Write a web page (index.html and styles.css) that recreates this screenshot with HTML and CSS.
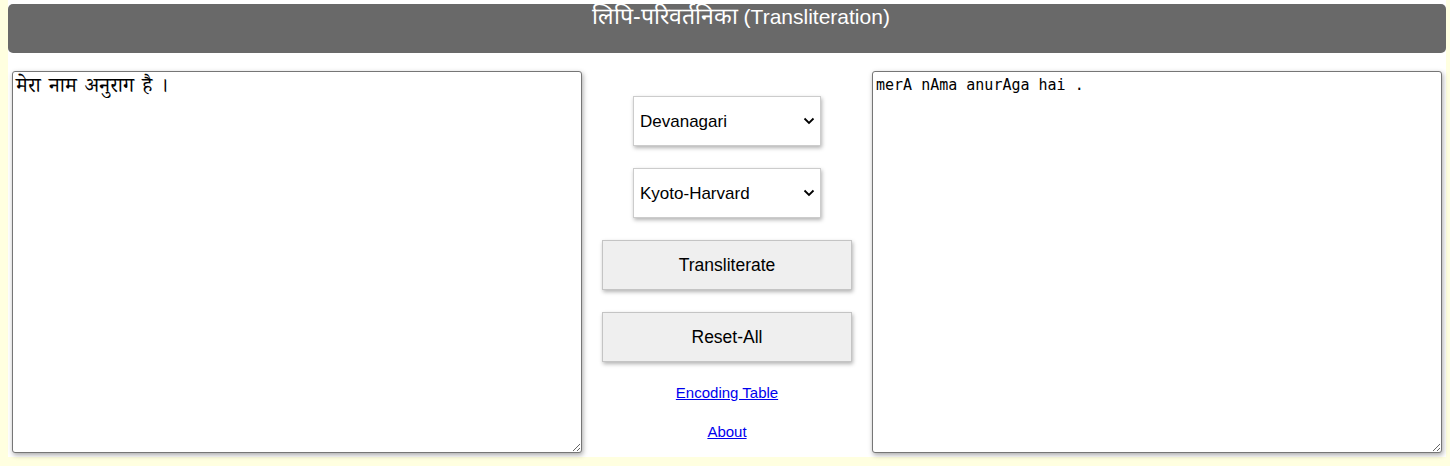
FILE: index.html
```html
<!DOCTYPE html>
<html lang="hi">
<head>
<meta charset="utf-8">
<title>लिपि-परिवर्तनिका</title>
<link rel="stylesheet" href="styles.css">
</head>
<body>
<div class="page">
  <header class="banner">
    <h1 class="title"><span class="title-hi">लिपि-परिवर्तनिका</span> (Transliteration)</h1>
  </header>
  <main class="workspace">
    <textarea class="pane pane-source">मेरा नाम अनुराग है ।</textarea>
    <div class="controls">
      <span class="picker-wrap">
        <select class="picker">
          <option>Devanagari</option>
          <option>Kyoto-Harvard</option>
          <option>IAST</option>
        </select>
        <svg class="chevron" width="12" height="8" viewBox="0 0 12 8" aria-hidden="true"><path d="M1.5 1.5 L6 6 L10.5 1.5" fill="none" stroke="#000" stroke-width="1.8"/></svg>
      </span>
      <span class="picker-wrap">
        <select class="picker">
          <option>Kyoto-Harvard</option>
          <option>Devanagari</option>
          <option>IAST</option>
        </select>
        <svg class="chevron" width="12" height="8" viewBox="0 0 12 8" aria-hidden="true"><path d="M1.5 1.5 L6 6 L10.5 1.5" fill="none" stroke="#000" stroke-width="1.8"/></svg>
      </span>
      <button class="action" type="button">Transliterate</button>
      <button class="action" type="button">Reset-All</button>
      <a class="link" href="#">Encoding Table</a>
      <a class="link" href="#">About</a>
    </div>
    <textarea class="pane pane-target">merA nAma anurAga hai .</textarea>
  </main>
</div>
</body>
</html>
```
FILE: styles.css
```css
html, body {
  margin: 0;
  padding: 0;
}
body {
  background: #ffffe0;
  height: 466px;
  font-family: "Liberation Sans", Arial, sans-serif;
}
.page {
  background: #ffffff;
  margin: 0 4px 0 8px;
  padding: 4px 4px 4px 4px;
  height: 449px;
}
.banner {
  background: #696969;
  height: 49px;
  border-radius: 5px;
  margin: 0 -4px;
}
.title {
  margin: 0;
  padding-left: 28px;
  color: #ffffff;
  font-weight: normal;
  font-size: 21px;
  line-height: 24px;
  text-align: center;
}
.title-hi {
  font-size: 23px;
  line-height: 24px;
}
.workspace {
  display: flex;
  margin-top: 18px;
}
.pane {
  box-sizing: border-box;
  width: 570px;
  height: 382px;
  margin: 0;
  padding: 2px 3px;
  border: 1px solid #767676;
  border-radius: 3px;
  box-shadow: 1px 2px 5px rgba(0, 0, 0, 0.35);
  background: #fff;
  color: #000;
  resize: both;
}
.pane-source {
  font-family: "Liberation Serif", "Noto Serif Devanagari", serif;
  font-size: 21px;
  line-height: 24px;
  padding-top: 1px;
  word-spacing: 3px;
}
.pane-target {
  font-family: "DejaVu Sans Mono", "Liberation Mono", monospace;
  font-size: 15px;
  padding-top: 4px;
}
.controls {
  width: 290px;
  display: flex;
  flex-direction: column;
  align-items: center;
  gap: 22px;
  padding-top: 25px;
}
.picker-wrap {
  position: relative;
  display: block;
  width: 188px;
  height: 50px;
}
.picker {
  box-sizing: border-box;
  appearance: none;
  -webkit-appearance: none;
  width: 188px;
  height: 50px;
  padding: 0 24px 0 6px;
  border: 1px solid #cccccc;
  border-radius: 0;
  background: #ffffff;
  box-shadow: 1px 2px 4px rgba(0, 0, 0, 0.3);
  font-family: "Liberation Sans", Arial, sans-serif;
  font-size: 17px;
  color: #000;
}
.chevron {
  position: absolute;
  right: 6px;
  top: 21px;
  pointer-events: none;
}
.action {
  box-sizing: border-box;
  width: 250px;
  height: 50px;
  border: 1px solid #c4c4c4;
  border-radius: 0;
  background: #efefef;
  box-shadow: 1px 2px 4px rgba(0, 0, 0, 0.3);
  font-family: "Liberation Sans", Arial, sans-serif;
  font-size: 17.5px;
  color: #000;
}
.link {
  font-size: 15px;
  line-height: 17px;
  color: #0000ee;
  text-decoration: underline;
}
```
